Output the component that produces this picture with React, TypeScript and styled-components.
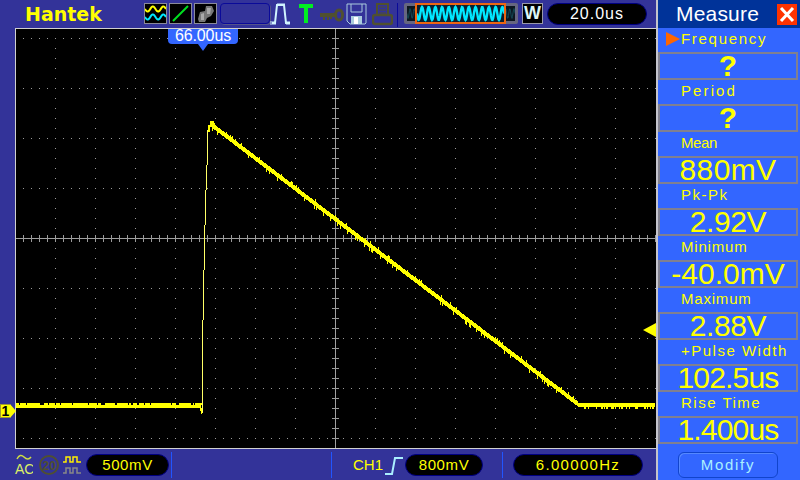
import React from 'react';
import styled, { createGlobalStyle } from 'styled-components';

const Global = createGlobalStyle`
  html, body { margin: 0; padding: 0; background: #333399; }
  #root { width: 800px; height: 480px; overflow: hidden; }
  * { box-sizing: border-box; }
`;

const Device = styled.div`
  width: 800px; height: 480px; display: flex; font-family: "Liberation Sans", Arial, sans-serif; background: #333399;
`;
const Main = styled.div`
  width: 656px; display: flex; flex-direction: column; flex: none;
`;
const TopBar = styled.div`
  height: 28px; display: flex; align-items: flex-start; padding-top: 3px; position: relative;
`;
const Logo = styled.div`
  width: 144px; padding-left: 25px; height: 22px; line-height: 22px; font-family: "DejaVu Sans", sans-serif; font-weight: 700; font-size: 19px; color: #ffff00; flex: none;
`;
const IconBox = styled.div`
  width: 23px; height: 21px; margin-right: 2px; border: 1px solid #8a8a9a; background: #000; flex: none; display: flex;
  svg { display: block; }
`;
const EmptySlot = styled.div`
  width: 50px; height: 21px; margin-left: 1px; border: 1px solid #0a0a99; border-radius: 4px; box-shadow: 1px 1px 0 #55558a; flex: none;
`;
const PlainIcon = styled.svg<{ $w: number; $ml: number }>`
  width: ${p => p.$w}px; height: 24px; margin-left: ${p => p.$ml}px; flex: none; display: block;
`;
const VSep = styled.div<{ $h?: number; $ml: number; $color?: string }>`
  width: 1px; height: ${p => p.$h ?? 24}px; margin-left: ${p => p.$ml}px; background: ${p => p.$color ?? '#2255ff'}; flex: none;
`;
const Overview = styled.div`
  width: 114px; height: 21px; margin-left: 6px; flex: none; position: relative; background: #0c1620; border: 3px solid #666680; border-radius: 2px; display: flex; justify-content: center; align-items: stretch;
`;
const OverviewWindow = styled.div`
  position: absolute; left: 8px; top: -3px; width: 91px; height: 21px; border: 2px solid #ee6611; background: #0a2030;
  svg { display: block; }
`;
const WBox = styled.div`
  width: 21px; height: 21px; margin-left: 4px; background: #000; border: 1px solid #99a; color: #ddf6f6; font-weight: 700; font-size: 18px; line-height: 19px; text-align: center; flex: none;
`;
const Pill = styled.div<{ $w: number; $ml: number; $color?: string; $size?: number; $ls?: number }>`
  width: ${p => p.$w}px; height: 22px; margin-left: ${p => p.$ml}px; border-radius: 11px; background: #000; border: 1px solid #000080;
  color: ${p => p.$color ?? '#ffff00'}; font-size: ${p => p.$size ?? 15}px; line-height: 20px; text-align: center; letter-spacing: ${p => p.$ls ?? 0.6}px; flex: none;
`;
const ScreenRow = styled.div`
  height: 421px; padding-left: 15px; position: relative; flex: none;
`;
const Screen = styled.div`
  width: 641px; height: 421px; background: #000; border-top: 1px solid #d0d0d0; border-left: 1px solid #d0d0d0; border-bottom: 1px solid #d0d0d0; overflow: hidden;
  svg { display: block; }
`;
const Cursor = styled.div`
  position: absolute; left: 168px; top: 1px; width: 70px; height: 15px; background: #3366ff; border-radius: 0 0 4px 4px; color: #fff; font-size: 16px; line-height: 14px; text-align: center; letter-spacing: -.1px;
  &::after { content: ''; position: absolute; left: 30px; top: 15px; border-left: 5px solid transparent; border-right: 5px solid transparent; border-top: 7px solid #3366ff; }
`;
const ChannelMark = styled.div`
  position: absolute; left: 0; top: 376px; width: 10px; height: 14px; background: #ffff00; border: 1px solid #a09a30; border-right: none; color: #000; font-weight: 700; font-size: 14px; line-height: 12px; text-align: center;
  &::after { content: ''; position: absolute; left: 9px; top: -1px; border-top: 7px solid transparent; border-bottom: 7px solid transparent; border-left: 6px solid #ffff00; }
`;
const TriggerMark = styled.div`
  position: absolute; left: 643px; top: 295px; border-top: 7px solid transparent; border-bottom: 7px solid transparent; border-right: 13px solid #ffff00;
`;
const BottomBar = styled.div`
  height: 31px; display: flex; align-items: center; flex: none;
`;
const ChLabel = styled.div`
  margin-left: 21px; width: 31px; color: #ffff00; font-size: 15px; line-height: 20px; flex: none;
`;
const Side = styled.div`
  width: 144px; flex: none; background: #3366ff; border-left: 2px solid #c4c4cc; display: flex; flex-direction: column; padding: 0 2px 0 0;
`;
const SideHead = styled.div`
  height: 28px; margin-right: -2px; background: #003399; display: flex; align-items: center; color: #fff; font-size: 21px; letter-spacing: .2px;
`;
const HeadTitle = styled.div`
  width: 119px; text-align: center; flex: none;
`;
const CloseBtn = styled.div`
  width: 20px; height: 21px; background: #ff3300; flex: none; display: flex;
  svg { display: block; }
`;
const MeasureLabel = styled.div<{ $ls?: number }>`
  height: 24px; padding-left: 23px; color: #ffff00; font-size: 15px; line-height: 22px; letter-spacing: ${p => p.$ls ?? 1.1}px; white-space: pre; position: relative;
`;
const ActiveArrow = styled.span`
  position: absolute; left: 8px; top: 4px; border-top: 7px solid transparent; border-bottom: 7px solid transparent; border-left: 14px solid #ff6600;
`;
const ValueBox = styled.div<{ $ls?: number }>`
  height: 28px; border: 2px solid #808090; color: #ffff00; font-size: 30px; line-height: 23px; text-align: center; white-space: nowrap; letter-spacing: ${p => p.$ls ?? 0}px;
`;
const Question = styled.span`
  font-weight: 700; font-size: 30px;
`;
const Modify = styled.div`
  width: 100px; height: 26px; margin: 8px 0 0 20px; border: 1px solid #1144cc; border-radius: 6px; box-shadow: inset 1px 1px 0 #5588ff; color: #aaf0ff; font-size: 15px; line-height: 24px; text-align: center; letter-spacing: 1.7px;
`;

function rng(seed: number) {
  let s = seed;
  return () => { s = (s * 16807) % 2147483647; return s / 2147483647; };
}

function Grid() {
  const dots: React.ReactNode[] = [];
  for (let cx = 40; cx <= 600; cx += 40) {
    if (cx === 320) continue;
    for (let y = 9; y <= 419; y += 10) dots.push(<rect key={`c${cx}-${y}`} x={cx - 1} y={y} width={1} height={1} fill="#9a9a9a" />);
  }
  for (let ry = 9; ry <= 409; ry += 50) {
    if (ry === 209) continue;
    for (let x = 7; x < 640; x += 8) dots.push(<rect key={`r${ry}-${x}`} x={x} y={ry} width={1} height={1} fill="#9a9a9a" />);
  }
  const ticks: React.ReactNode[] = [];
  for (let y = 9; y <= 409; y += 10) ticks.push(<rect key={`t${y}`} x={316} y={y} width={7} height={1} fill="#9a9a9a" />);
  for (let x = 7; x < 640; x += 8) ticks.push(<rect key={`u${x}`} x={x} y={206} width={1} height={7} fill="#9a9a9a" />);
  return (
    <g>
      {dots}
      <rect x={319} y={0} width={1} height={420} fill="#a0a0a0" />
      <rect x={0} y={209} width={640} height={1} fill="#a0a0a0" />
      {ticks}
    </g>
  );
}

const RISE: [number, number, number, number][] = [
  [184, 379, 2, 3], [185, 382, 1, 3],
  [186, 291, 1, 93], [187, 241, 1, 50], [188, 196, 1, 45], [189, 161, 1, 35],
  [190, 136, 1, 25], [191, 101, 1, 35], [192, 96, 2, 7], [194, 92, 4, 6],
];

function Trace() {
  const r = rng(4242);
  const bars: React.ReactNode[] = [];
  bars.push(<rect key="b" x={0} y={376} width={185} height={3} fill="#ffff00" />);
  for (let x = 0; x < 185; x++) if (r() < 0.6) bars.push(<rect key={`n${x}`} x={x} y={374} width={1 + Math.floor(r() * 3)} height={2} fill="#ffff00" />);
  RISE.forEach(([x, y, w, h], i) => {
    bars.push(<rect key={`r${i}`} x={x} y={y} width={w} height={h} fill={w === 1 && h > 20 ? '#ffff66' : '#ffff00'} />);
  });
  for (let x = 196; x < 562; x++) {
    const y = 94 + (x - 196) * 0.762;
    const spike = r();
    bars.push(<rect key={`f${x}`} x={x} y={Math.round(y - (spike < 0.1 ? 2 : 0))} width={1} height={spike > 0.9 ? 8 : spike < 0.1 ? 7 : 5} fill="#ffff00" />);
  }
  bars.push(<rect key="t" x={562} y={374} width={77} height={4} fill="#ffff00" />);
  for (let x = 568; x < 639; x++) if (r() < 0.35) bars.push(<rect key={`m${x}`} x={x} y={378} width={1} height={2} fill="#ffff00" />);
  return <g>{bars}</g>;
}

const sine = (w: number, periods: number, cy: number, a: number) => {
  let d = '';
  for (let x = 0; x <= w; x += 0.5) d += `${x === 0 ? 'M' : 'L'}${x} ${(cy + Math.sin((x / w) * periods * Math.PI * 2) * a).toFixed(2)}`;
  return d;
};

export default function App() {
  return (
    <Device>
      <Global />
      <Main>
        <TopBar>
          <Logo>Hantek</Logo>
          <IconBox>
            <svg width="21" height="19" viewBox="0 0 21 19" fill="none" strokeWidth="2">
              <path d={sine(21, 2, 5, 2.6)} stroke="#ffff00" />
              <path d={sine(21, 2, 13, 2.6)} stroke="#00e8ff" />
            </svg>
          </IconBox>
          <IconBox>
            <svg width="21" height="19" viewBox="0 0 21 19" fill="none"><path d="M3 17 L18 2" stroke="#00e020" strokeWidth="2" /></svg>
          </IconBox>
          <IconBox>
            <svg width="21" height="19" viewBox="0 0 21 19"><path d="M3 15 L5 8 L10 7 L11 2 L17 2 L19 7 L16 12 L12 14 L10 18 L4 18 Z" fill="#777" /><path d="M6 10 L9 9 L9 16 L6 16 Z M12 4 L16 4 L15 10 L12 10 Z" fill="#aaa" /></svg>
          </IconBox>
          <EmptySlot />
          <PlainIcon $w={22} $ml={0} viewBox="0 0 22 24" fill="none">
            <path d="M2 20 H5 L7 2 H14 L16 20 H20" stroke="#d0f4ff" strokeWidth="2" />
            <path d="M1 18v4M3 18v4M5 18v4M8 0v3M10 0v3M12 0v3M14 0v3M17 18v4M19 18v4" stroke="#d0f4ff" strokeWidth="1" />
          </PlainIcon>
          <PlainIcon $w={14} $ml={7} viewBox="0 0 14 24" fill="none">
            <path d="M0 3 H14 M7 3 V20" stroke="#00ee22" strokeWidth="4" />
          </PlainIcon>
          <PlainIcon $w={24} $ml={7} viewBox="0 0 24 24" fill="none">
            <path d="M0 12 H16" stroke="#505030" strokeWidth="4" />
            <path d="M4 14v3M8 14v3M11 14v2" stroke="#505030" strokeWidth="2" />
            <ellipse cx="19" cy="12" rx="3.5" ry="5" stroke="#505030" strokeWidth="3" />
          </PlainIcon>
          <PlainIcon $w={21} $ml={2} viewBox="0 0 21 24" fill="none">
            <path d="M1 1 H20 V20 L19 21 H4 L1 18 Z" stroke="#aaccdd" strokeWidth="1" />
            <path d="M5 1 V9 H16 V1" stroke="#aaccdd" strokeWidth="1" />
            <rect x="5" y="13" width="11" height="8" fill="#aaccdd" />
            <rect x="8" y="14" width="4" height="7" fill="#ffffff" />
          </PlainIcon>
          <PlainIcon $w={21} $ml={5} viewBox="0 0 21 24" fill="none" stroke="#505030">
            <rect x="5" y="1" width="11" height="11" strokeWidth="2" />
            <path d="M7 4 H14 M7 7 H14 M7 10 H14" strokeWidth="1" />
            <rect x="1" y="12" width="19" height="9" rx="2" strokeWidth="2.5" />
          </PlainIcon>
          <VSep $ml={4} $color="#0a0a99" />
          <Overview>
            <svg width="108" height="15" viewBox="0 0 108 15" fill="none"><path d={sine(108, 26, 7.5, 5)} stroke="#134a55" strokeWidth="1" /></svg>
            <OverviewWindow>
              <svg width="87" height="17" viewBox="0 0 87 17" fill="none"><path d={sine(87, 13, 8.5, 6.5)} stroke="#00e8ff" strokeWidth="2.4" /></svg>
            </OverviewWindow>
          </Overview>
          <WBox>W</WBox>
          <Pill $w={100} $ml={4} $color="#ffffff" $size={16} $ls={1}>20.0us</Pill>
        </TopBar>
        <ScreenRow>
          <Screen>
            <svg width="640" height="419" viewBox="0 0 640 419" shapeRendering="crispEdges">
              <Grid />
              <Trace />
            </svg>
          </Screen>
          <Cursor>66.00us</Cursor>
          <ChannelMark>1</ChannelMark>
          <TriggerMark />
        </ScreenRow>
        <BottomBar>
          <PlainIcon $w={18} $ml={15} viewBox="0 0 18 24" fill="none">
            <path d="M2 6 Q5 0 9 4 T16 4" stroke="#ccdd44" strokeWidth="1.5" />
            <text x="0" y="21" fontFamily="Liberation Sans" fontSize="14" fill="#ddee66">AC</text>
          </PlainIcon>
          <PlainIcon $w={20} $ml={6} viewBox="0 0 20 24" fill="none">
            <circle cx="10" cy="12" r="9" stroke="#505030" strokeWidth="2" />
            <text x="3.5" y="17" fontFamily="Liberation Sans" fontWeight="700" fontSize="12" fill="#505030">20</text>
          </PlainIcon>
          <PlainIcon $w={18} $ml={4} viewBox="0 0 18 24" fill="none">
            <path d="M0 9 H3 V4 H7 V9 H10 V4 H14 V9 H18" stroke="#ffee00" strokeWidth="1.5" />
            <path d="M0 20 H3 V15 H7 V20 H10 V15 H14 V20 H18" stroke="#888888" strokeWidth="1.5" />
          </PlainIcon>
          <Pill $w={83} $ml={5}>500mV</Pill>
          <VSep $ml={2} $h={26} />
          <VSep $ml={159} $h={26} />
          <ChLabel>CH1</ChLabel>
          <PlainIcon $w={18} $ml={1} viewBox="0 0 18 24" fill="none">
            <path d="M0 21 H7 L10 5 H18" stroke="#aaeeff" strokeWidth="2" />
          </PlainIcon>
          <Pill $w={78} $ml={2}>800mV</Pill>
          <VSep $ml={19} $h={26} />
          <Pill $w={130} $ml={10} $ls={1.3}>6.00000Hz</Pill>
        </BottomBar>
      </Main>
      <Side>
        <SideHead>
          <HeadTitle>Measure</HeadTitle>
          <CloseBtn>
            <svg width="20" height="21" viewBox="0 0 20 21" fill="none"><path d="M4 4 L16 17 M16 4 L4 17" stroke="#fff" strokeWidth="3" /></svg>
          </CloseBtn>
        </SideHead>
        <MeasureLabel $ls={1.7}><ActiveArrow />Frequency</MeasureLabel>
        <ValueBox><Question>?</Question></ValueBox>
        <MeasureLabel $ls={2.1}>Period</MeasureLabel>
        <ValueBox><Question>?</Question></ValueBox>
        <MeasureLabel $ls={-0.4}>Mean</MeasureLabel>
        <ValueBox $ls={0.4}>880mV</ValueBox>
        <MeasureLabel $ls={1.5}>Pk-Pk</MeasureLabel>
        <ValueBox $ls={-0.4}>2.92V</ValueBox>
        <MeasureLabel $ls={0.8}>Minimum</MeasureLabel>
        <ValueBox>-40.0mV</ValueBox>
        <MeasureLabel $ls={0.8}>Maximum</MeasureLabel>
        <ValueBox $ls={-0.4}>2.88V</ValueBox>
        <MeasureLabel $ls={1.5}>+Pulse Width</MeasureLabel>
        <ValueBox $ls={-0.8}>102.5us</ValueBox>
        <MeasureLabel $ls={1.5}>Rise Time</MeasureLabel>
        <ValueBox $ls={-0.8}>1.400us</ValueBox>
        <Modify>Modify</Modify>
      </Side>
    </Device>
  );
}
